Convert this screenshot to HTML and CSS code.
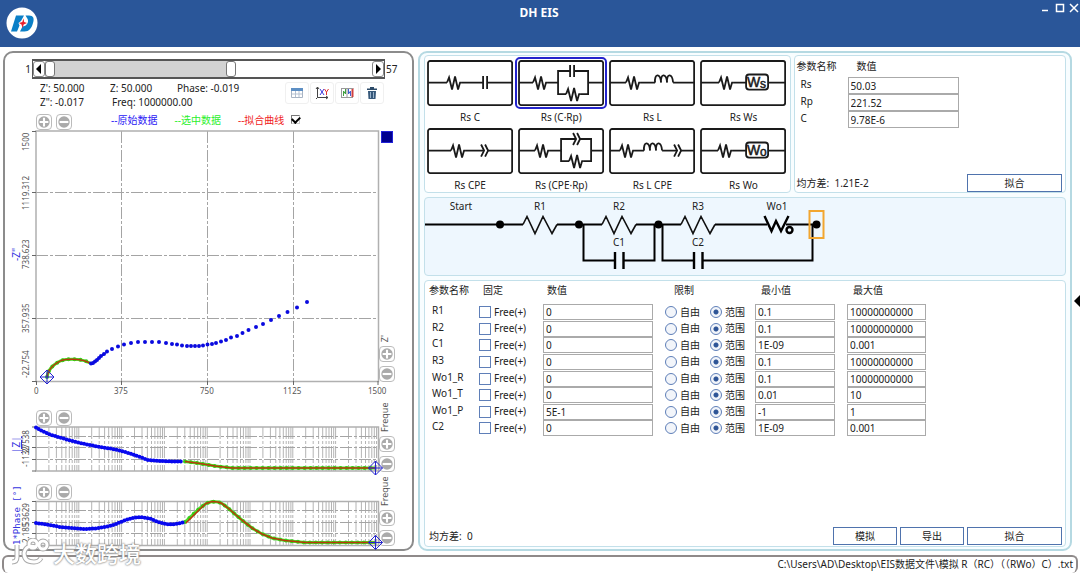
FILE: index.html
```html
<!DOCTYPE html>
<html lang="zh-CN">
<head>
<meta charset="utf-8">
<meta name="viewport" content="width=device-width, initial-scale=1">
<title>DH EIS</title>
<link rel="stylesheet" href="styles.css">
</head>
<body>
<svg class="defs" width="0" height="0" aria-hidden="true">
  <defs>
    <path id="zig" d="M0 0l2-5 3 12 3-13 3 13 2-7h1"/>
    <path id="coil" d="M0 0c-1-9 5-10 6 0c-1-9 5-10 6 0c-1-9 5-10 6 0"/>
    <path id="cpe" d="M0-6l3 6-3 6M4-6l3 6-3 6"/>
    <path id="decade" d="M12.9 0v44M20.4 0v44M25.8 0v44M29.9 0v44M33.3 0v44M36.2 0v44M38.7 0v44M40.9 0v44M42.8 0v44"/>
    <g id="log-grid">
      <use href="#decade" x="36"/><use href="#decade" x="78.8"/><use href="#decade" x="121.6"/><use href="#decade" x="164.4"/>
      <use href="#decade" x="207.2"/><use href="#decade" x="250"/><use href="#decade" x="292.8"/><use href="#decade" x="335.6"/>
    </g>
    <g id="cursor"><path d="M0-7l7 7-7 7-7-7zM0-7v14M-7 0h14"/></g>
    <symbol id="plus" viewBox="0 0 16 16"><circle cx="8" cy="8" r="6.5" fill="#aaa"/><path d="M8 3v10M3 8h10" stroke="#fff" stroke-width="2.4"/></symbol>
    <symbol id="minus" viewBox="0 0 16 16"><circle cx="8" cy="8" r="6.5" fill="#aaa"/><path d="M3 8h10" stroke="#fff" stroke-width="2.4"/></symbol>
  </defs>
</svg>

<header class="titlebar">
  <svg class="logo" viewBox="0 0 32 32" role="img" aria-label="DH">
    <circle cx="16" cy="16" r="15.5" fill="#fff"/>
    <path d="M10 8.500H18l-3 5.500-2.500 2 1 2.500-2.500 6H5z" fill="#0b7fc7"/>
    <path d="M19.500 8.500h3.500c4.500 0 5.500 3 4 7.500-1.500 5.500-4 8.500-8.500 8.500h-4.500l2.500-5 2-.5c3.500-1 4.500-6 2.500-8z" fill="#0b7fc7"/>
    <path d="M17.500 11.500l.7 3.500 2.800 1-3.300 1.500-1.200 3.500-1-3.500-2.500-1.500 3.300-1z" fill="#e8202a"/>
  </svg>
  <h1 class="app-title">DH EIS</h1>
  <div class="window-buttons">
    <button type="button" aria-label="最小化"><svg viewBox="0 0 10 10"><path d="M1 7.500h6"/></svg></button>
    <button type="button" aria-label="最大化"><svg viewBox="0 0 10 10"><path d="M1.500 1.500h7v7h-7z"/></svg></button>
    <button type="button" aria-label="关闭"><svg viewBox="0 0 10 10"><path d="M1 1l8 8M9 1l-8 8"/></svg></button>
  </div>
</header>

<main class="workspace">
  <section class="panel plots">
    <div class="range-row">
      <label class="range-min" for="range-from">1</label>
      <div class="range">
        <button type="button" class="range-step" aria-label="后退"><svg viewBox="0 0 10 10"><path d="M7 0v10L2 5z"/></svg></button>
        <div class="range-track">
          <input id="range-from" type="range" min="1" max="57" value="1" aria-label="起点">
          <input id="range-to" type="range" min="1" max="57" value="33" aria-label="终点">
        </div>
        <button type="button" class="range-step" aria-label="前进"><svg viewBox="0 0 10 10"><path d="M3 0v10l5-5z"/></svg></button>
      </div>
      <label class="range-max" for="range-to">57</label>
    </div>

    <div class="info-row">
      <div class="readout">
        <span>Z': 50.000</span><span>Z: 50.000</span><span>Phase: -0.019</span>
        <span>Z": -0.017</span><span class="freq">Freq: 1000000.00</span>
      </div>
      <div class="tools">
        <button type="button" aria-label="表格"><svg viewBox="0 0 14 14"><path d="M1.500 2.500h11v9h-11z" fill="#fff" stroke="#a8b4c4"/><path d="M1 2h12v3H1z" fill="#5d8fc4"/><path d="M2 8h10M5.500 5v6M9 5v6" stroke="#b4c0d0" fill="none"/></svg></button>
        <button type="button" aria-label="坐标轴"><svg viewBox="0 0 14 14"><path d="M2.500 1v10.500H13M1 3l1.500-2L4 3M1 13l1.500-1.500M11 10l2 1.500-2 1.500" stroke="#444" fill="none"/><path d="M5 3l4 6M9 3L5 9" stroke="#3a3ae0" fill="none"/><path d="M9.500 3l2 3 2-3M11.500 6v3" stroke="#e03030" fill="none"/></svg></button>
        <button type="button" aria-label="曲线"><svg viewBox="0 0 14 14"><path d="M12.500 2v9" stroke="#d04040" stroke-width="2"/><path d="M1 2.500h12M1 11.500h12M1.500 2v9M7 2v9" stroke="#999"/><path d="M3.500 10V5l2 3V3" stroke="#40a040" fill="none"/><path d="M8.500 3v5l2-3v5" stroke="#4060d0" fill="none"/></svg></button>
        <button type="button" aria-label="删除"><svg viewBox="0 0 14 14"><path d="M2 2.500h10v1.500H2zM5 1h4v1.500H5z" fill="#2c4a68"/><path d="M3 5h8l-.5 8h-7z" fill="#36587a"/><path d="M5.500 6v6M8.500 6v6" stroke="#9cb4cc"/></svg></button>
      </div>
    </div>

    <div class="legend-row">
      <div class="zoomers">
        <button type="button" aria-label="放大"><svg><use href="#plus"/></svg></button>
        <button type="button" aria-label="缩小"><svg><use href="#minus"/></svg></button>
      </div>
      <div class="legend">
        <span class="raw">--原始数据</span><span class="picked">--选中数据</span>
        <label class="fit">--拟合曲线<input class="tick" type="checkbox" checked></label>
      </div>
    </div>

    <div class="chart">
      <svg class="plot" viewBox="5 130 374 270">
        <g class="grid"><path d="M36 192.500H378M36 255.500H378M36 318.500H378M121.500 131V381M207.500 131V381M293.500 131V381"/></g>
        <path class="frame" d="M36 131H378.500V381.500H36z"/>
        <path class="ticks" d="M32 131.500h4M32 192.500h4M32 255.500h4M32 318.500h4M32 381.500h4M36.500 381v4M121.500 381v4M207.500 381v4M293.500 381v4M378 381v4"/>
        <g class="tick-text">
          <text transform="translate(29 151) rotate(-90)">1500</text>
          <text transform="translate(29 210) rotate(-90)">1119.312</text>
          <text transform="translate(29 269) rotate(-90)">738.623</text>
          <text transform="translate(29 333) rotate(-90)">357.935</text>
          <text transform="translate(29 378) rotate(-90)">-22.754</text>
          <text x="34" y="394">0</text><text x="114" y="394">375</text><text x="200" y="394">750</text>
          <text x="283" y="394">1125</text><text x="368" y="394">1500</text>
        </g>
        <text class="axis-text" transform="translate(20 261) rotate(-90)">-Z"</text>
        <path class="green" d="M47 377Q48 370 54 365T66 359.500T78 359.500T90 363"/>
        <path class="green-dots" d="M47 377Q48 370 54 365T66 359.500T78 359.500T90 363"/>
        <path class="red" d="M47 377Q48 370 54 365T66 359.500T78 359.500T90 363"/>
        <path class="dots" d="M91 363.500h0M93 363h0M95 361.500h0M97 360h0M99 358h0M101 356h0M104 354h0M107 351.500h0M112 349h0M118 346.500h0M124 344.500h0M131 343h0M138 342h0M145 342h0M152 342h0M159 342h0M166 343h0M172 344h0M177 344.500h0M182 345.500h0M187 346h0M191 346h0M195 346h0M199 346h0M203 345.500h0M207.500 344.500h0M212 344h0M216 343h0M221 341.500h0M226 340h0M231 337.500h0M237 336h0M242.500 333h0M248.500 330h0M256 327h0M263 324h0M271 320h0M279 316h0M287.500 312h0M297 307.500h0M307 302h0"/>
        <use class="cursor" href="#cursor" x="47" y="377"/>
      </svg>
      <div class="side side-main">
        <span class="swatch"></span>
        <span class="side-text">Z'</span>
        <button type="button" aria-label="横轴放大"><svg><use href="#plus"/></svg></button>
        <button type="button" aria-label="横轴缩小"><svg><use href="#minus"/></svg></button>
      </div>
    </div>

    <div class="chart">
      <div class="stack">
        <div class="zoomers">
          <button type="button" aria-label="放大"><svg><use href="#plus"/></svg></button>
          <button type="button" aria-label="缩小"><svg><use href="#minus"/></svg></button>
        </div>
        <svg class="plot" viewBox="5 426 374 48">
          <g class="grid"><use href="#log-grid" y="427" class="log"/><path d="M36 436.500H378M36 447.500H378M36 459.500H378"/></g>
          <path class="frame" d="M36 427H378.500V471H36z"/>
          <path class="ticks" d="M32 427h4M32 436.500h4M32 447.500h4M32 459.500h4M32 471h4"/>
          <g class="tick-text">
            <text transform="translate(29 467) rotate(-90)">-1132</text>
            <text transform="translate(29 453) rotate(-90)">27538</text>
          </g>
          <text class="axis-text underline" transform="translate(20 453) rotate(-90)">|Z|</text>
          <path class="green" d="M185 461.500L200 463.500 215 466 232 468H375"/>
          <path class="green-dots" d="M185 461.500L200 463.500 215 466 232 468H375"/>
          <path class="red" d="M185 461.500L200 463.500 215 466 232 468H375"/>
          <path class="beads" d="M36 427.500L42 431 50 434.500 60 437.500 70 440.500 80 443 90 445 100 447 110 448.500 120 450.500 130 453.500 140 457 148 460 160 461 172 461.500 183 461.500"/>
          <use class="cursor" href="#cursor" x="375.500" y="468"/>
        </svg>
      </div>
      <div class="side">
        <span class="side-text">Freque</span>
        <button type="button" aria-label="横轴放大"><svg><use href="#plus"/></svg></button>
        <button type="button" aria-label="横轴缩小"><svg><use href="#minus"/></svg></button>
      </div>
    </div>

    <div class="chart">
      <div class="stack">
        <div class="zoomers">
          <button type="button" aria-label="放大"><svg><use href="#plus"/></svg></button>
          <button type="button" aria-label="缩小"><svg><use href="#minus"/></svg></button>
        </div>
        <svg class="plot" viewBox="5 500 374 48">
          <g class="grid"><use href="#log-grid" y="501" class="log"/><path d="M36 510.500H378M36 522.500H378M36 533.500H378"/></g>
          <path class="frame" d="M36 501.500H378.500V545.500H36z"/>
          <path class="ticks" d="M32 501.500h4M32 510.500h4M32 522.500h4M32 533.500h4M32 545.500h4"/>
          <g class="tick-text">
            <text transform="translate(29 543) rotate(-90)">2.185</text>
            <text transform="translate(29 526) rotate(-90)">53629</text>
          </g>
          <text class="axis-text mono" transform="translate(20 545) rotate(-90)">1*Phase [°]</text>
          <path class="green" d="M185 522L200 508 206 503.500 212 501.500 218 502 222 503.500 228 508 236 515 243 521 252 528 262 534 272 538 285 540.500 305 542.500H375"/>
          <path class="green-dots" d="M185 522L200 508 206 503.500 212 501.500 218 502 222 503.500 228 508 236 515 243 521 252 528 262 534 272 538 285 540.500 305 542.500H375"/>
          <path class="red" d="M186 523L200 509 206 503.500 212 501.500 218 502 222 503.500 228 508 236 515 243 521 252 528 262 534 272 538 285 540.500 305 542.500H375"/>
          <path class="beads" d="M36 523L50 525 60 527 70 528 85 529 95 528.500 105 527 115 524.500 123 521 132 518 140 517 150 518.500 158 522 166 524 173 524.500 183 522.500"/>
          <use class="cursor" href="#cursor" x="375.500" y="542.500"/>
        </svg>
      </div>
      <div class="side">
        <span class="side-text">Freque</span>
        <button type="button" aria-label="横轴放大"><svg><use href="#plus"/></svg></button>
        <button type="button" aria-label="横轴缩小"><svg><use href="#minus"/></svg></button>
      </div>
    </div>
  </section>

  <section class="panel model">
    <div class="model-top">
      <div class="box models">
        <button type="button" class="tile"><svg viewBox="0 0 86 46"><rect x="1" y="1" width="84" height="44" rx="2"/><path d="M1 22.500H20M34 22.500H56M60 22.500H85M56 16v13M60 16v13"/><use href="#zig" x="20" y="22.500"/></svg><span>Rs C</span></button>
        <button type="button" class="tile selected" aria-pressed="true"><svg viewBox="0 0 86 46"><rect x="1" y="1" width="84" height="44" rx="2"/><path d="M1 22.500H15M29 22.500H40M52 11H40V34H48M56 11H70V34H62M70 22.500H85M52 5v12M56 5v12"/><use href="#zig" x="15" y="22.500"/><use href="#zig" x="48" y="34"/></svg><span>Rs (C·Rp)</span></button>
        <button type="button" class="tile"><svg viewBox="0 0 86 46"><rect x="1" y="1" width="84" height="44" rx="2"/><path d="M1 22.500H17M31 22.500H46M64 22.500H85"/><use href="#zig" x="17" y="22.500"/><use href="#coil" x="46" y="22.500"/></svg><span>Rs L</span></button>
        <button type="button" class="tile"><svg viewBox="0 0 86 46"><rect x="1" y="1" width="84" height="44" rx="2"/><path d="M1 22.500H19M33 22.500H46M68 22.500H85"/><use href="#zig" x="19" y="22.500"/><rect x="46" y="14.500" width="22" height="15" rx="3"/><text x="47" y="27" class="w">W</text><text x="60" y="28" class="w-sub">s</text></svg><span>Rs Ws</span></button>
        <button type="button" class="tile"><svg viewBox="0 0 86 46"><rect x="1" y="1" width="84" height="44" rx="2"/><path d="M1 22.500H24M38 22.500H56M61 22.500H85"/><use href="#zig" x="24" y="22.500"/><use href="#cpe" x="54" y="22.500"/></svg><span>Rs CPE</span></button>
        <button type="button" class="tile"><svg viewBox="0 0 86 46"><rect x="1" y="1" width="84" height="44" rx="2"/><path d="M1 22.500H17M31 22.500H43M57 11H43V33H51M61 11H73V33H65M73 22.500H85"/><use href="#zig" x="17" y="22.500"/><use href="#zig" x="51" y="33"/><use href="#cpe" x="55" y="11"/></svg><span>Rs (CPE·Rp)</span></button>
        <button type="button" class="tile"><svg viewBox="0 0 86 46"><rect x="1" y="1" width="84" height="44" rx="2"/><path d="M1 22.500H11M25 22.500H35M53 22.500H67M71 22.500H85"/><use href="#zig" x="11" y="22.500"/><use href="#coil" x="35" y="22.500"/><use href="#cpe" x="65" y="22.500"/></svg><span>Rs L CPE</span></button>
        <button type="button" class="tile"><svg viewBox="0 0 86 46"><rect x="1" y="1" width="84" height="44" rx="2"/><path d="M1 22.500H18M32 22.500H46M68 22.500H85"/><use href="#zig" x="18" y="22.500"/><rect x="46" y="14.500" width="22" height="15" rx="3"/><text x="47" y="27" class="w">W</text><text x="60" y="28" class="w-sub">o</text></svg><span>Rs Wo</span></button>
      </div>

      <div class="box result">
        <table class="result-table">
          <thead><tr><th>参数名称</th><th>数值</th></tr></thead>
          <tbody>
            <tr><td><label for="p-rs">Rs</label></td><td><input id="p-rs" type="text" value="50.03"></td></tr>
            <tr><td><label for="p-rp">Rp</label></td><td><input id="p-rp" type="text" value="221.52"></td></tr>
            <tr><td><label for="p-c">C</label></td><td><input id="p-c" type="text" value="9.78E-6"></td></tr>
          </tbody>
        </table>
        <div class="foot">
          <span>均方差:&nbsp; 1.21E-2</span>
          <button type="button" class="btn wide">拟合</button>
        </div>
      </div>
    </div>

    <div class="box circuit">
      <svg viewBox="425 198 640 77">
        <path d="M425 224.500H523M557 224.500H602M636 224.500H681M715 224.500H767M786 224.500H816" class="wire"/>
        <path d="M523 224.500l4-8 8 17 8-17 9 17 5-9M602 224.500l4-8 8 17 8-17 9 17 5-9M681 224.500l4-8 8 17 8-17 9 17 5-9" class="res"/>
        <path d="M583.500 224.500V260.500H615M624 260.500H654.500V224.500M662.500 224.500V260.500H694M703 260.500H812.500V224.500" class="wire"/>
        <path d="M615 252v17M623.500 252v17M694 252v17M702.500 252v17" class="plate"/>
        <path d="M764.500 216l7 15 4.500-10 5 10 7.500-15" class="plate"/>
        <circle cx="789.500" cy="230" r="3" class="plate"/>
        <g class="nodes"><circle cx="500" cy="224.500" r="4"/><circle cx="579" cy="224.500" r="4"/><circle cx="658.500" cy="224.500" r="4"/><circle cx="816.500" cy="224.500" r="4"/></g>
        <rect x="809.500" y="211" width="14" height="27" class="pick"/>
        <g class="names">
          <text x="461" y="210">Start</text><text x="540" y="210">R1</text><text x="619" y="210">R2</text><text x="698" y="210">R3</text>
          <text x="777" y="210">Wo1</text><text x="619" y="246">C1</text><text x="698" y="246">C2</text>
        </g>
      </svg>
    </div>

    <div class="box params">
      <table class="param-table">
        <colgroup><col class="c-name"><col class="c-fix"><col class="c-val"><col class="c-lim"><col class="c-min"><col class="c-max"></colgroup>
        <thead><tr><th>参数名称</th><th>固定</th><th>数值</th><th>限制</th><th>最小值</th><th>最大值</th></tr></thead>
        <tbody id="param-rows"></tbody>
      </table>
      <div class="foot">
        <span>均方差:&nbsp; 0</span>
        <div class="actions">
          <button type="button" class="btn">模拟</button>
          <button type="button" class="btn">导出</button>
          <button type="button" class="btn wide">拟合</button>
        </div>
      </div>
    </div>
  </section>

  <button type="button" class="collapse" aria-label="收起"><svg viewBox="0 0 6 12"><path d="M6 0v12L0 6z"/></svg></button>
</main>

<footer class="status">C:\Users\AD\Desktop\EIS数据文件\模拟 R（RC）（（RWo）C）.txt</footer>

<div class="watermark">
  <svg viewBox="0 0 40 28" aria-hidden="true">
    <g class="halo"><path d="M7 7v12q0 5-5 5M26 9q-10-3-12 6 0 9 10 9 5 0 7-4"/><circle cx="23" cy="6" r="4"/><circle cx="33" cy="7" r="4"/></g>
    <g class="core"><path d="M7 7v12q0 5-5 5M26 9q-10-3-12 6 0 9 10 9 5 0 7-4"/><circle cx="23" cy="6" r="4"/><circle cx="33" cy="7" r="4"/></g>
  </svg>
  <span>大数跨境</span>
</div>
<script src="app.js"></script>
</body>
</html>
```

FILE: styles.css
```css
* { box-sizing: border-box; }
body {
  margin: 0;
  min-height: 100vh;
  display: flex;
  flex-direction: column;
  position: relative;
  overflow: hidden;
  background: #fff;
  color: #222;
  font: 10px/14px "Noto Sans", "Noto Sans CJK SC", sans-serif;
}
button, input { font: inherit; color: inherit; margin: 0; padding: 0; }
button { background: none; border: 0; }
svg { display: block; }
.defs { position: absolute; }

.titlebar {
  height: 47px;
  display: grid;
  grid-template-columns: 1fr auto 1fr;
  background: #2a5699;
  color: #fff;
  padding: 0 8px 0 6px;
}
.logo { width: 32px; height: 32px; margin-top: 7px; }
.app-title { margin: 4px 0 0; font-size: 12px; line-height: 17px; font-weight: 700; }
.window-buttons { justify-self: end; display: flex; gap: 4px; padding-top: 3px; height: 13px; margin-right: -7px; }
.window-buttons svg { width: 10px; height: 10px; fill: none; stroke: #fff; stroke-width: 1.5; }

.workspace {
  flex: 1;
  display: grid;
  grid-template-columns: minmax(0, 411fr) minmax(0, 654fr) 4px;
  column-gap: 4px;
  padding: 4px 0 4px 3px;
}
.panel { border: 2px solid #8c8c8c; border-radius: 10px; min-width: 0; }

.range-row {
  display: grid;
  grid-template-columns: 27px minmax(0, 1fr) 27px;
  align-items: center;
  margin-top: 6px;
}
.range-min { text-align: right; padding-right: 1px; }
.range-max { padding-left: 1px; }
.range { display: flex; height: 20px; border: 2px solid #555; border-left-width: 1px; border-right-width: 1px; }
.range-step { width: 12px; border: 1px solid #888; border-radius: 3px; display: grid; place-items: center; }
.range-step svg { width: 10px; height: 10px; }
.range-track {
  flex: 1;
  display: grid;
  background: linear-gradient(to right, #d2d2d2 57%, #fff 57%);
}
.range-track input {
  grid-area: 1 / 1;
  appearance: none;
  width: 100%;
  height: 16px;
  background: none;
  pointer-events: none;
}
.range-track input::-webkit-slider-thumb {
  appearance: none;
  pointer-events: auto;
  width: 10px;
  height: 16px;
  background: #fff;
  border: 1px solid #777;
  border-radius: 3px;
}

.info-row { display: flex; justify-content: space-between; padding: 2px 28px 0 35px; height: 30px; }
.readout { display: grid; grid-template-columns: 70px 67px auto; grid-auto-rows: 14px; white-space: nowrap; }
.freq { grid-column: 2 / 4; padding-left: 2px; }
.tools { display: flex; gap: 1px; padding-top: 1px; }
.tools button { width: 24px; height: 22px; border: 1px solid #f0f0f0; border-radius: 3px; display: grid; place-items: center; }
.tools svg { width: 14px; height: 14px; }

.legend-row { display: flex; padding-top: 5px; }
.zoomers { display: flex; gap: 4px; padding-left: 31px; }
.zoomers button, .side button { width: 16px; height: 16px; border: 1px solid #bbb; border-radius: 4px; background: #fff; flex: none; }
.zoomers svg, .side button svg { width: 14px; height: 14px; }
.legend { display: flex; gap: 17px; padding-left: 39px; line-height: 12px; white-space: nowrap; }
.raw { color: #2a20f5; }
.picked { color: #2bef2b; }
.fit { color: #f02020; display: flex; gap: 7px; }
.tick {
  appearance: none;
  width: 9px;
  height: 9px;
  margin-top: 1px;
  border: 1px solid #777;
  border-right-color: #ccc;
  border-bottom-color: #ccc;
  display: grid;
  place-items: center;
}
.tick:checked::before {
  content: "";
  width: 6px;
  height: 4px;
  border: solid #000;
  border-width: 0 0 2px 2px;
  transform: translateY(-1px) rotate(-45deg);
}

.chart { display: grid; grid-template-columns: minmax(0, 1fr) 33px; }
.chart + .chart .stack { padding-top: 10px; }
.plot { width: 100%; overflow: visible; position: relative; z-index: 1; }
.grid { fill: none; stroke: #a4a4a4; stroke-width: 1; stroke-dasharray: 12 2 3 2; }
.log { stroke: #b4b4b4; }
.frame { fill: none; stroke: #b0b0b0; stroke-width: 1.5; }
.ticks { stroke: #666; }
.tick-text { font-size: 8px; fill: #555; }
.axis-text { font-size: 10px; fill: #3535e0; }
.underline { text-decoration: underline; }
.mono { font-family: "DejaVu Sans Mono", monospace; font-size: 9px; }
.green { fill: none; stroke: #4ce02a; stroke-width: 3; }
.green-dots { fill: none; stroke: #35cf18; stroke-width: 4; stroke-linecap: round; stroke-dasharray: 0 6; }
.red { fill: none; stroke: #b8380c; stroke-width: 1.6; }
.dots { fill: none; stroke: #0a0adf; stroke-width: 4; stroke-linecap: round; }
.beads { fill: none; stroke: #0808ee; stroke-width: 4; stroke-linecap: round; stroke-dasharray: 0 3; }
.cursor { fill: none; stroke: #2525d0; stroke-width: 1; }

.side { display: flex; flex-direction: column; align-items: flex-start; gap: 4px; padding-top: 4px; }
.side-main { padding: 1px 0 18px; }
.swatch { width: 12px; height: 12px; margin: 0 0 auto 2px; background: #00008f; border: 1px solid #2222d8; }
.side-text { writing-mode: vertical-rl; transform: rotate(180deg); font-size: 9px; line-height: 12px; color: #555; }
.side:not(.side-main) .side-text { height: 28px; }

.model { border-color: #b5d9e2; border-radius: 9px; background: #f8fdff; padding: 2px 4px; display: flex; flex-direction: column; gap: 4px; }
.model-top { display: grid; grid-template-columns: minmax(0, 366fr) minmax(0, 272fr); gap: 3px; }
.box { border: 1px solid #c3e0ea; border-radius: 4px; background: #fff; min-width: 0; }
.models { display: grid; grid-template-columns: repeat(4, minmax(0, 1fr)); }
.tile { padding: 4px 3px 0 2px; height: 68px; text-align: center; }
.tile svg { width: 100%; fill: none; stroke: #1a1a1a; stroke-width: 1.8; border-radius: 2px; }
.tile span { display: block; margin-top: 4px; }
.tile text { fill: #1a1a1a; stroke: #1a1a1a; stroke-width: 0.5; font-family: "Liberation Sans", sans-serif; }
.w { font-size: 14px; }
.w-sub { font-size: 12px; }
.selected svg { outline: 2px solid #2424cc; outline-offset: 1px; }

.result { display: flex; flex-direction: column; justify-content: space-between; padding: 3px 3px 0 2px; }
table { border-collapse: collapse; }
th, td { padding: 0; text-align: left; font-weight: 400; vertical-align: top; }
.result-table { width: 162px; }
.result-table th { height: 18px; }
.result-table th:last-child { padding-left: 9px; }
.result-table td:first-child { width: 51px; padding-left: 4px; }
td input[type="text"] {
  display: block;
  width: 100%;
  height: 17px;
  border: 1px solid #aaa;
  padding: 1px 2px 0;
  background: #fff;
}
.foot { display: flex; justify-content: space-between; align-items: center; }
.btn { width: 64px; height: 18px; border: 1px solid #4f73ad; background: #fff; line-height: 14px; }
.wide { width: 95px; }
.actions { display: flex; gap: 3px; }

.circuit { background: #eef7fe; }
.circuit svg { width: 100%; }
.wire { fill: none; stroke: #000; stroke-width: 2; }
.res { fill: none; stroke: #111; stroke-width: 1.6; }
.plate { fill: none; stroke: #000; stroke-width: 2.4; }
.nodes { fill: #000; }
.pick { fill: none; stroke: #f2a630; stroke-width: 2; }
.names { text-anchor: middle; fill: #222; }

.params { flex: 1; display: flex; flex-direction: column; justify-content: space-between; padding: 0 3px 1px 4px; }
.param-table { table-layout: fixed; width: 497px; height: 156px; margin-left: -4px; }
.param-table thead tr { height: 23px; }
.param-table th { padding: 2px 0 0 4px; }
.param-table th:nth-child(4) { padding-left: 9px; }
.param-table th:nth-child(5), .param-table th:nth-child(6) { padding-left: 6px; }
.param-table td { line-height: 13px; }
.param-table td:first-child { padding-left: 7px; }
.param-table td input[type="text"] { height: 16px; padding-top: 0; }
.c-name { width: 54px; }
.c-fix { width: 64px; }
.c-val { width: 122px; }
.c-lim { width: 90px; }
.c-min { width: 92px; }
.c-max { width: 79px; }
.param-table td:nth-child(3), .param-table td:nth-child(5) { padding-right: 12px; }
.choice { display: inline-flex; vertical-align: top; align-items: center; gap: 3px; height: 16px; width: 45px; white-space: nowrap; }
.choice input { appearance: none; flex: none; width: 12px; height: 12px; border: 1px solid #5f7fb8; background: #fff; }
.choice input[type="checkbox"]:checked { background: #3a62a8; }
.choice input[type="radio"] { border-radius: 50%; background: #f2f5fa; }
.choice input[type="radio"]:checked { background: radial-gradient(circle, #2f5597 0 2px, #f2f5fa 3px); }

.collapse { align-self: center; justify-self: end; width: 6px; height: 12px; }
.collapse svg { width: 6px; height: 12px; }

.status {
  height: 18px;
  margin: 0 2px;
  padding: 0 3px;
  border: 2px solid #8f8a8a;
  border-bottom: 0;
  border-radius: 6px;
  text-align: right;
  white-space: nowrap;
}

.watermark {
  position: absolute;
  left: 10px;
  bottom: 7px;
  display: flex;
  align-items: center;
  gap: 3px;
  pointer-events: none;
  z-index: 2;
}
.watermark svg { width: 40px; height: 28px; fill: none; }
.watermark span {
  font: 500 22px/28px "Noto Sans CJK SC", sans-serif;
  color: #fff;
  text-shadow: 0 0 2px #777, 0 0 2px #999;
}
.halo { stroke: #aaa; stroke-width: 5; }
.core { stroke: #fff; stroke-width: 3; }
```

FILE: app.js
```js
const rows = [
  ["R1", "0", "0.1", "10000000000"],
  ["R2", "0", "0.1", "10000000000"],
  ["C1", "0", "1E-09", "0.001"],
  ["R3", "0", "0.1", "10000000000"],
  ["Wo1_R", "0", "0.1", "10000000000"],
  ["Wo1_T", "0", "0.01", "10"],
  ["Wo1_P", "5E-1", "-1", "1"],
  ["C2", "0", "1E-09", "0.001"]
];

document.getElementById("param-rows").innerHTML = rows.map(([name, value, min, max]) => `
  <tr>
    <td>${name}</td>
    <td><label class="choice"><input type="checkbox">Free(+)</label></td>
    <td><input type="text" value="${value}" aria-label="${name} 数值"></td>
    <td><label class="choice"><input type="radio" name="limit-${name}">自由</label><label class="choice"><input type="radio" name="limit-${name}" checked>范围</label></td>
    <td><input type="text" value="${min}" aria-label="${name} 最小值"></td>
    <td><input type="text" value="${max}" aria-label="${name} 最大值"></td>
  </tr>`).join("");
```
